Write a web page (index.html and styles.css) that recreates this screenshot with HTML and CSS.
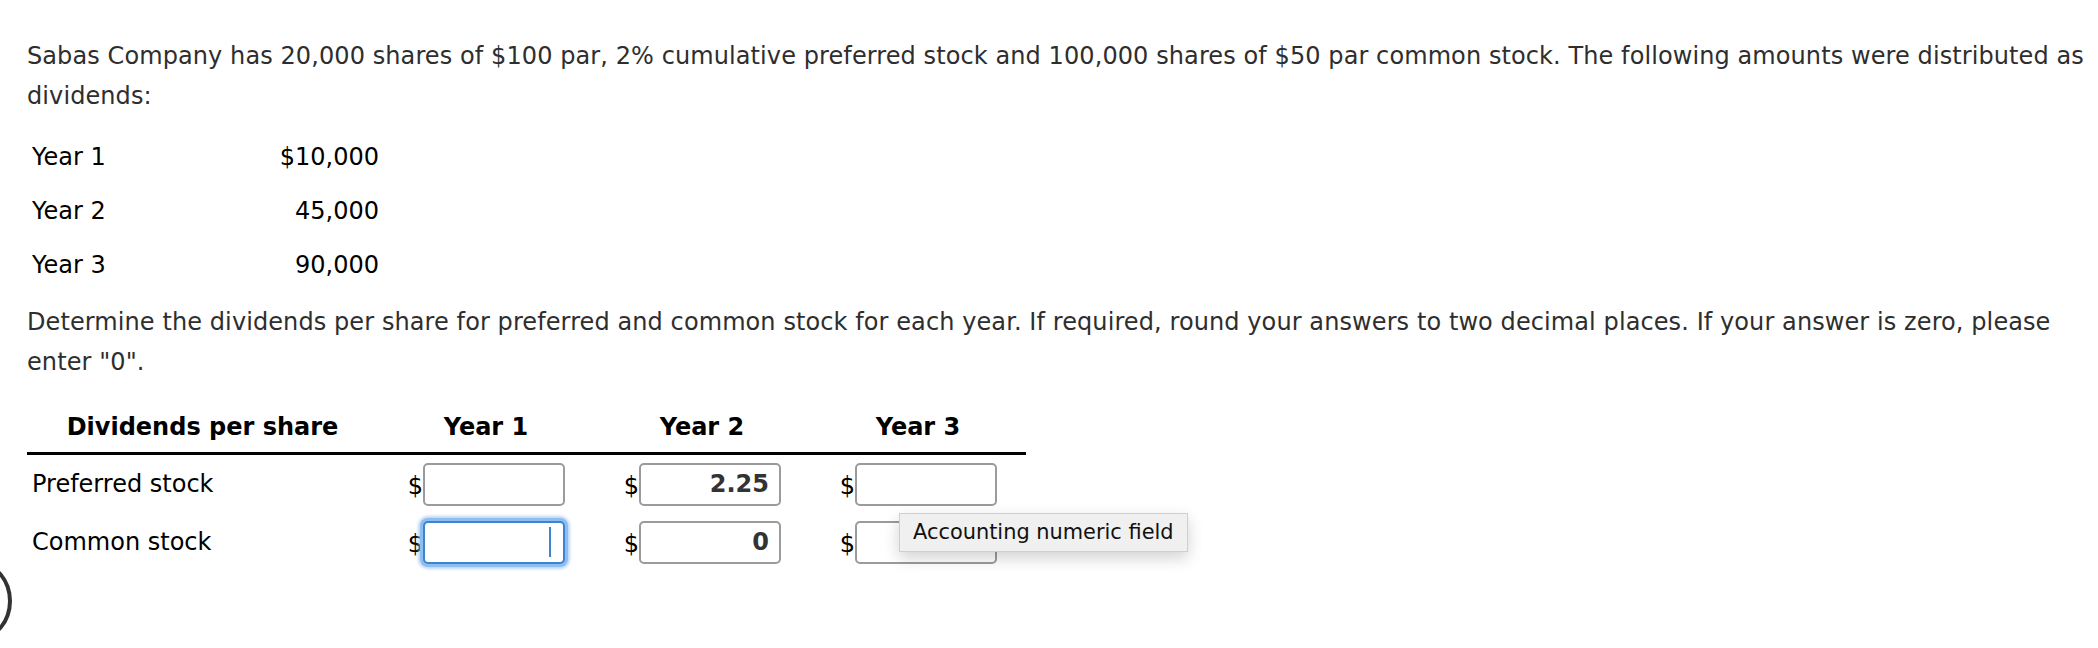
FILE: index.html
```html
<!DOCTYPE html>
<html>
<head>
<meta charset="utf-8">
<link rel="stylesheet" href="styles.css">
</head>
<body>
<div class="page">
  <p class="para first">Sabas Company has 20,000 shares of $100 par, 2% cumulative preferred stock and 100,000 shares of $50 par common stock. The following amounts were distributed as dividends:</p>
  <div class="given">
    <div class="g-label">Year 1</div><div class="g-val">$10,000</div>
    <div class="g-label">Year 2</div><div class="g-val">45,000</div>
    <div class="g-label">Year 3</div><div class="g-val">90,000</div>
  </div>
  <p class="para second">Determine the dividends per share for preferred and common stock for each year. If required, round your answers to two decimal places. If your answer is zero, please enter "0".</p>
  <div class="answer">
    <div class="head">
      <div class="h-cell">Dividends per share</div>
      <div class="h-cell">Year 1</div>
      <div class="h-cell">Year 2</div>
      <div class="h-cell">Year 3</div>
    </div>
    <div class="row">
      <div class="r-label">Preferred stock</div>
      <div class="r-cell"><span class="cur">$</span><span class="box"></span></div>
      <div class="r-cell"><span class="cur">$</span><span class="box">2.25</span></div>
      <div class="r-cell"><span class="cur">$</span><span class="box"></span></div>
    </div>
    <div class="row">
      <div class="r-label">Common stock</div>
      <div class="r-cell"><span class="cur">$</span><span class="box focus"><span class="caret"></span></span></div>
      <div class="r-cell"><span class="cur">$</span><span class="box">0</span></div>
      <div class="r-cell"><span class="cur">$</span><span class="box"></span></div>
    </div>
  </div>
</div>
<div class="tooltip">Accounting numeric field</div>
<div class="help-ring"></div>
</body>
</html>
```
FILE: styles.css
```css
html, body {
  margin: 0;
  padding: 0;
  background: #fff;
}
body {
  width: 2098px;
  height: 648px;
  overflow: hidden;
  position: relative;
}
.page {
  padding: 36px 6px 0 27px;
  font-family: "DejaVu Sans", Verdana, sans-serif;
}
.para {
  margin: 0;
  font-family: "DejaVu Sans", Verdana, sans-serif;
  font-size: 24px;
  letter-spacing: 0.09px;
  line-height: 40px;
  color: #2e2e2e;
}
.given {
  display: grid;
  grid-template-columns: 180px 172px;
  grid-auto-rows: 54px;
  margin-top: 14px;
  font-size: 24px;
  color: #000;
  align-items: center;
}
.g-label { padding-left: 5px; }
.g-val { text-align: right; }
.para.second { margin-top: 10px; }
.answer {
  margin-top: 25px;
  width: 999px;
  color: #000;
  font-size: 24px;
}
.head, .row {
  display: grid;
  grid-template-columns: 351px repeat(3, 216px);
  align-items: center;
}
.head {
  border-bottom: 3px solid #000;
  padding-bottom: 5px;
  line-height: 40px;
}
.h-cell {
  text-align: center;
  font-weight: bold;
}
.row { height: 58px; }
.r-label { padding-left: 5px; }
.r-cell {
  display: flex;
  justify-content: flex-end;
  align-items: center;
  padding-right: 29px;
}
.cur {
  margin-right: 0;
  padding-top: 4px;
}
.box {
  box-sizing: border-box;
  width: 142px;
  height: 43px;
  border: 2px solid #9b9b9b;
  border-radius: 5px;
  background: #fff;
  display: flex;
  align-items: center;
  justify-content: flex-end;
  padding-right: 10px;
  font-weight: bold;
  color: #333;
  font-size: 24px;
}
.box.focus {
  border-color: #3b85d0;
  box-shadow: 0 0 0 3px #8ebdf0, 0 0 3px 5px rgba(142,189,240,0.6);
}
.caret {
  width: 2px;
  height: 30px;
  background: #3b85d0;
  margin-right: 2px;
}
.tooltip {
  position: absolute;
  left: 899px;
  top: 513px;
  box-sizing: border-box;
  width: 289px;
  height: 39px;
  padding-left: 13px;
  background: #f0f0f0;
  border: 1px solid #cfcfcf;
  box-shadow: 0 6px 16px rgba(0,0,0,0.18);
  font-family: "DejaVu Sans", Verdana, sans-serif;
  font-size: 20.9px;
  line-height: 37px;
  color: #111;
}
.help-ring {
  position: absolute;
  left: -54px;
  top: 562px;
  width: 58px;
  height: 70px;
  border: 4px solid #333;
  border-radius: 50%;
}
```
